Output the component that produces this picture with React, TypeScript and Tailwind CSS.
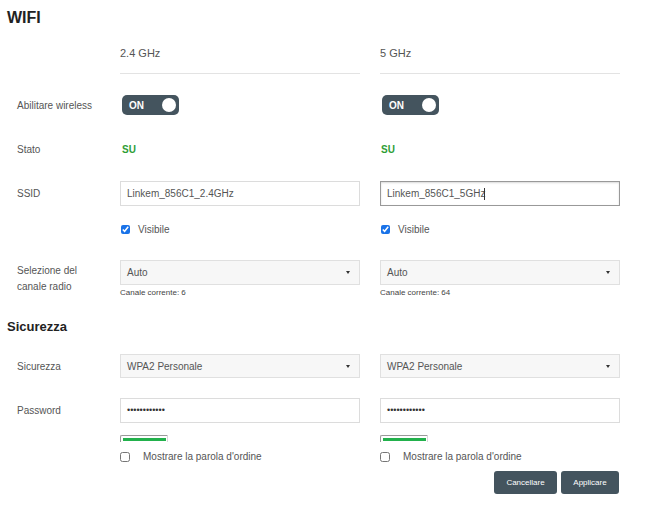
import React from 'react'

const font = { fontFamily: '"Liberation Sans", Arial, sans-serif' }

function Toggle() {
  return (
    <div className="flex h-[20px] w-[57px] items-center justify-between rounded-[5px] bg-[#44545e] pl-[7px] pr-[3px]">
      <span className="text-[10px] font-bold text-white">ON</span>
      <span className="h-[14px] w-[14px] rounded-full bg-white" />
    </div>
  )
}

function Select({ value }: { value: string }) {
  return (
    <div className="flex h-full w-full items-center justify-between border border-[#e0e0e0] bg-[#f7f7f7] pl-[6px] pr-[9px] text-[10px] text-[#555]">
      <span>{value}</span>
      <span className="h-0 w-0 border-x-[2.5px] border-t-[3px] border-x-transparent border-t-[#333]" />
    </div>
  )
}

function Strength() {
  return (
    <div className="h-[7px] w-[48px] rounded-tl-[2px] border-l border-t border-r border-l-[#9a9a9a] border-t-[#9a9a9a] border-r-[#d8d8d8] pl-[2px] pr-[1px] pt-[2px]">
      <div className="h-[3px] bg-[#22b14c]" />
    </div>
  )
}

function ShowPwd() {
  return (
    <label className="flex items-center text-[10px] text-[#555]">
      <input type="checkbox" className="m-0 h-[10px] w-[10px]" />
      <span className="ml-[13px]">Mostrare la parola d'ordine</span>
    </label>
  )
}

const row = 'grid grid-cols-[83px_240px_240px] gap-x-[20px] pl-[10px]'

export default function App() {
  return (
    <div className="h-[514px] w-[646px] overflow-hidden bg-white px-[7px]" style={font}>
      <div className="flex h-[36px] items-center text-[16px] font-bold text-[#222]">WIFI</div>

      <div className={row}>
        <div />
        <div className="flex h-[38px] items-center border-b border-[#e3e3e3] pb-[2px] text-[11px] text-[#555]">2.4 GHz</div>
        <div className="flex h-[38px] items-center border-b border-[#e3e3e3] pb-[2px] text-[11px] text-[#555]">5 GHz</div>
      </div>

      <div className={`${row} mt-[21px] h-[20px] items-center text-[10px] text-[#555]`}>
        <span>Abilitare wireless</span>
        <div className="pl-[2px]"><Toggle /></div>
        <div className="pl-[2px]"><Toggle /></div>
      </div>

      <div className={`${row} mt-[24px] h-[20px] items-center text-[10px] text-[#555]`}>
        <span>Stato</span>
        <span className="pl-[2px] text-[10px] font-bold text-[#2e9e36]">SU</span>
        <span className="pl-[1px] text-[10px] font-bold text-[#2e9e36]">SU</span>
      </div>

      <div className={`${row} mt-[22px] h-[25px] items-center text-[10px] text-[#555]`}>
        <span>SSID</span>
        <div className="flex h-full items-center border border-[#dcdcdc] px-[6px]">Linkem_856C1_2.4GHz</div>
        <div className="flex h-full items-center border border-[#999] px-[6px] shadow-[inset_0_1px_2px_rgba(0,0,0,0.15)]">
          Linkem_856C1_5GHz<span className="ml-[-1px] h-[12px] w-px bg-[#333]" />
        </div>
      </div>

      <div className={`${row} mt-[16px] h-[14px] items-center text-[10px] text-[#555]`}>
        <div />
        <label className="flex items-center pl-[1px]">
          <input type="checkbox" defaultChecked className="m-0 h-[9px] w-[9px] accent-[#1a73e8]" />
          <span className="ml-[8px]">Visibile</span>
        </label>
        <label className="flex items-center pl-[1px]">
          <input type="checkbox" defaultChecked className="m-0 h-[9px] w-[9px] accent-[#1a73e8]" />
          <span className="ml-[8px]">Visibile</span>
        </label>
      </div>

      <div className={`${row} mt-[24px] text-[10px] text-[#555]`}>
        <span className="pt-[3px] leading-[16px]">Selezione del<br />canale radio</span>
        <div>
          <div className="h-[25px]"><Select value="Auto" /></div>
          <div className="mt-[2px] text-[8px] text-[#444]">Canale corrente: 6</div>
        </div>
        <div>
          <div className="h-[25px]"><Select value="Auto" /></div>
          <div className="mt-[2px] text-[8px] text-[#444]">Canale corrente: 64</div>
        </div>
      </div>

      <div className="mt-[18px] flex h-[20px] items-center text-[13px] font-bold text-[#222]">Sicurezza</div>

      <div className={`${row} mt-[17px] h-[24px] items-center text-[10px] text-[#555]`}>
        <span>Sicurezza</span>
        <Select value="WPA2 Personale" />
        <Select value="WPA2 Personale" />
      </div>

      <div className={`${row} mt-[20px] h-[25px] items-center text-[10px] text-[#555]`}>
        <span>Password</span>
        <div className="flex h-full items-center border border-[#dcdcdc] px-[6px] text-[9px] text-[#333]">••••••••••••</div>
        <div className="flex h-full items-center border border-[#dcdcdc] px-[6px] text-[9px] text-[#333]">••••••••••••</div>
      </div>

      <div className={`${row} mt-[12px]`}>
        <div />
        <div><Strength /><div className="mt-[7px]"><ShowPwd /></div></div>
        <div><Strength /><div className="mt-[7px]"><ShowPwd /></div></div>
      </div>

      <div className="mt-[7px] flex justify-end gap-[4px] pr-[20px]">
        <button className="h-[23px] w-[63px] rounded-[3px] bg-[#44545e] text-[8px] text-white">Cancellare</button>
        <button className="h-[23px] w-[58px] rounded-[3px] bg-[#44545e] text-[8px] text-white">Applicare</button>
      </div>
    </div>
  )
}
